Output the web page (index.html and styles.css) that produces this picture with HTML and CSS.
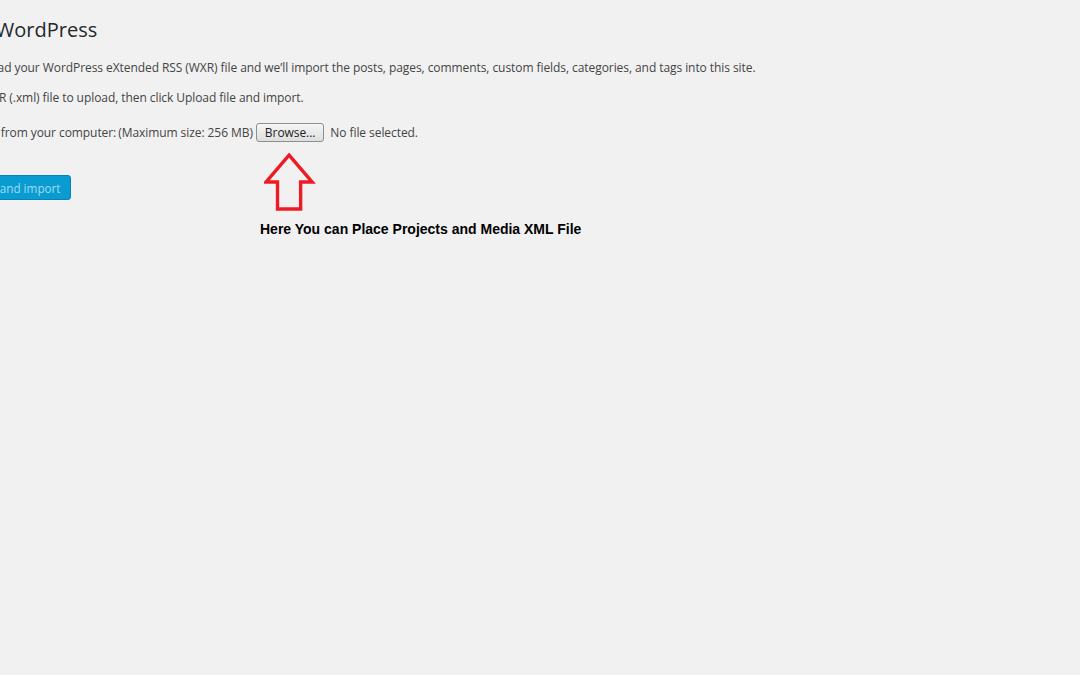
FILE: index.html
```html
<!DOCTYPE html>
<html>
<head>
    <meta charset="UTF-8">
    <title>Import WordPress</title>
    <link rel="stylesheet" href="styles.css">
</head>
<body>
    <div class="wrap">
        <h2>Import WordPress</h2>
        <p>Howdy! Upload your WordPress eXtended RSS (WXR) file and we&#8217;ll import the posts, pages, comments, custom fields, categories, and tags into this site.</p>
        <p>Choose a WXR (.xml) file to upload, then click Upload file and import.</p>
        <form class="upload-form">
            <div class="file-row">
                <label>Choose a file from your computer:</label>
                <span class="max-size">(Maximum size: 256 MB)</span>
                <button type="button" class="browse">Browse...</button>
                <span class="file-name">No file selected.</span>
            </div>
            <div class="submit-row">
                <button type="button" class="button-primary">Upload file and import</button>
            </div>
        </form>
    </div>

    <!-- annotation drawn over the screenshot -->
    <svg class="arrow" viewBox="0 0 56 62">
        <path d="M26 2 L2 30 L14 30 L14 58 L38 58 L38 30 L50 30 Z"/>
    </svg>
    <div class="note">Here You can Place Projects and Media XML File</div>
</body>
</html>
```

FILE: styles.css
```css
* { box-sizing: border-box; }
body {
    margin: 0;
    background: #f1f1f1;
    color: #444;
    font-family: "Open Sans", "Noto Sans", sans-serif;
    font-size: 12px;
    letter-spacing: -0.07px;
    overflow: hidden;
}
.wrap {
    margin-left: -73px;
    padding-top: 15px;
}
h2 {
    margin: 0 0 13px;
    font-size: 20px;
    font-weight: 400;
    line-height: 30px;
    letter-spacing: 0;
    color: #23282d;
}
p {
    margin: 0 0 11px;
    line-height: 19px;
}
.file-row {
    display: flex;
    align-items: center;
    gap: 3px;
    margin-top: 16px;
}
.max-size { margin-left: -1px; margin-right: 0; }
.browse {
    font-family: "Open Sans", "Noto Sans", sans-serif;
    font-size: 12px;
    letter-spacing: -0.07px;
    color: #222;
    height: 19px;
    padding: 0 8px;
    background: linear-gradient(#f6f6f6, #dedede);
    border: 1px solid #8f8f8f;
    border-radius: 3px;
    margin-right: 3px;
}
.submit-row { margin-top: 33px; }
.button-primary {
    font-family: "Open Sans", "Noto Sans", sans-serif;
    font-size: 11.7px;
    height: 25px;
    padding: 0 9px 0 10px;
    background: #0a9bd0;
    border: 1px solid #0784b5;
    border-radius: 3px;
    color: #9fdcf4;
}
.arrow {
    position: absolute;
    left: 264px;
    top: 153px;
    width: 54px;
    height: 60px;
    fill: none;
    stroke: #ed1c24;
    stroke-width: 3.5;
    stroke-linejoin: miter;
}
.note {
    position: absolute;
    left: 260px;
    top: 221px;
    font-family: "Liberation Sans", Arial, sans-serif;
    font-size: 14px;
    font-weight: bold;
    letter-spacing: 0;
    color: #000;
}
```
